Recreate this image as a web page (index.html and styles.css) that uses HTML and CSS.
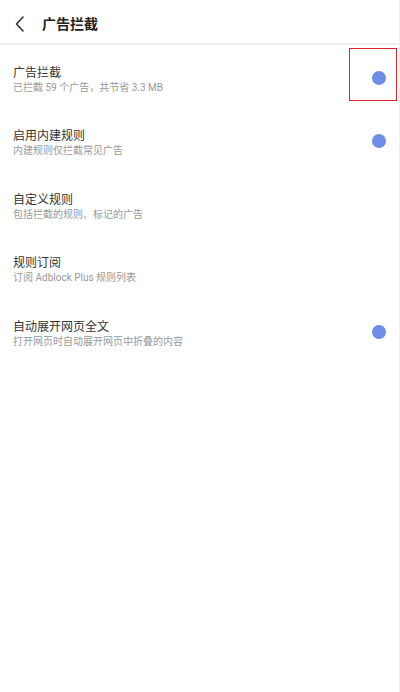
FILE: index.html
```html
<!DOCTYPE html>
<html lang="zh-CN">
<head>
<meta charset="utf-8">
<title>广告拦截</title>
<link rel="stylesheet" href="styles.css">
</head>
<body>
<div class="page">
  <header class="header">
    <svg class="back" width="10" height="16" viewBox="0 0 10 16" aria-hidden="true">
      <polyline points="8,1 1.5,8 8,15" fill="none" stroke="#333" stroke-width="1.6" stroke-linecap="round" stroke-linejoin="round"/>
    </svg>
    <h1 class="title">广告拦截</h1>
  </header>
  <ul class="list">
    <li class="row">
      <div class="text">
        <div class="name">广告拦截</div>
        <div class="desc">已拦截 59 个广告，共节省 3.3 MB</div>
      </div>
      <span class="dot"></span>
      <span class="mark"></span>
    </li>
    <li class="row">
      <div class="text">
        <div class="name">启用内建规则</div>
        <div class="desc">内建规则仅拦截常见广告</div>
      </div>
      <span class="dot"></span>
    </li>
    <li class="row">
      <div class="text">
        <div class="name">自定义规则</div>
        <div class="desc">包括拦截的规则、标记的广告</div>
      </div>
    </li>
    <li class="row">
      <div class="text">
        <div class="name">规则订阅</div>
        <div class="desc">订阅 Adblock Plus 规则列表</div>
      </div>
    </li>
    <li class="row">
      <div class="text">
        <div class="name">自动展开网页全文</div>
        <div class="desc">打开网页时自动展开网页中折叠的内容</div>
      </div>
      <span class="dot"></span>
    </li>
  </ul>
</div>
</body>
</html>
```

FILE: styles.css
```css
* { box-sizing: border-box; }
html, body {
  margin: 0;
  padding: 0;
  background: #fff;
}
body {
  font-family: Roboto, "Noto Sans CJK SC", "Noto Sans", sans-serif;
  color: #333;
}
.page {
  width: 400px;
  height: 692px;
  border-right: 1px solid #f0f0f0;
}
.header {
  height: 45px;
  padding-top: 5px;
  display: flex;
  align-items: center;
  border-bottom: 2px solid #f0f0f0;
}
.back {
  margin-left: 15px;
  width: 10px;
  height: 16px;
}
.title {
  margin: 0 0 0 17px;
  font-size: 14px;
  font-weight: 700;
  color: #222;
  line-height: 20px;
}
.list {
  list-style: none;
  margin: 0;
  padding: 1px 0 0 0;
}
.row {
  position: relative;
  height: 63.5px;
  display: flex;
  align-items: center;
  justify-content: space-between;
  padding: 0 13px 0 13px;
}
.text {
  padding-top: 4px;
}
.name {
  font-size: 12px;
  line-height: 16px;
  color: #333;
}
.desc {
  font-size: 10px;
  line-height: 14px;
  color: #999;
}
.dot {
  width: 14px;
  height: 14px;
  border-radius: 50%;
  background: #6d8ee6;
}
.mark {
  position: absolute;
  left: 349px;
  top: 2px;
  width: 48px;
  height: 53px;
  border: 1.5px solid #e8202a;
}
```
